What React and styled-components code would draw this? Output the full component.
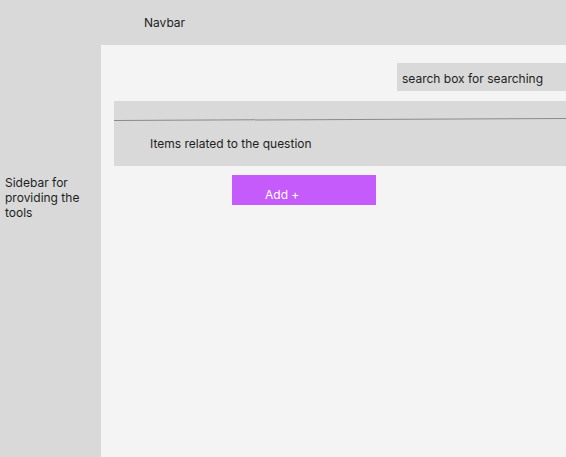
import React from 'react';
import styled, { createGlobalStyle } from 'styled-components';

const GlobalStyle = createGlobalStyle`
  html, body {
    margin: 0;
    padding: 0;
    background: #d9d9d9;
  }
  body {
    font-family: Inter, "Noto Sans", sans-serif;
    font-size: 12px;
    color: #1e1e1e;
  }
`;

const Page = styled.div`
  width: 566px;
  height: 457px;
  display: grid;
  grid-template-columns: 101px 1fr;
  grid-template-rows: 45px 1fr;
  background: #d9d9d9;
  overflow: hidden;
`;

const Navbar = styled.header`
  grid-column: 1 / 3;
  display: flex;
  align-items: center;
  padding-left: 144px;
  background: #d9d9d9;
`;

const Sidebar = styled.aside`
  background: #d9d9d9;
  padding: 130px 0 0 5px;
  line-height: 15px;
`;

const Main = styled.main`
  background: #f4f4f4;
  padding: 18px 0 0 13px;
  display: flex;
  flex-direction: column;
`;

const SearchBox = styled.div`
  align-self: flex-end;
  width: 164px;
  height: 28px;
  padding: 3px 0 0 5px;
  box-sizing: border-box;
  width: 169px;
  display: flex;
  align-items: center;
  background: #d9d9d9;
`;

const ItemsPanel = styled.section`
  margin-top: 10px;
  height: 65px;
  background: #d9d9d9;
  display: flex;
  flex-direction: column;
`;

const Divider = styled.div`
  margin-top: 18px;
  height: 1px;
  background: #8a8a8a;
  transform: rotate(-0.25deg);
`;

const ItemsLabel = styled.div`
  padding: 16px 0 0 36px;
`;

const AddButton = styled.button`
  margin: 9px 0 0 118px;
  width: 144px;
  height: 30px;
  padding: 9px 0 0 33px;
  border: none;
  background: #c55bfa;
  color: #fff;
  font: inherit;
  text-align: left;
`;

export default function App() {
  return (
    <>
      <GlobalStyle />
      <Page>
        <Navbar>Navbar</Navbar>
        <Sidebar>Sidebar for providing the tools</Sidebar>
        <Main>
          <SearchBox>search box for searching</SearchBox>
          <ItemsPanel>
            <Divider />
            <ItemsLabel>Items related to the question</ItemsLabel>
          </ItemsPanel>
          <div>
            <AddButton>Add +</AddButton>
          </div>
        </Main>
      </Page>
    </>
  );
}
